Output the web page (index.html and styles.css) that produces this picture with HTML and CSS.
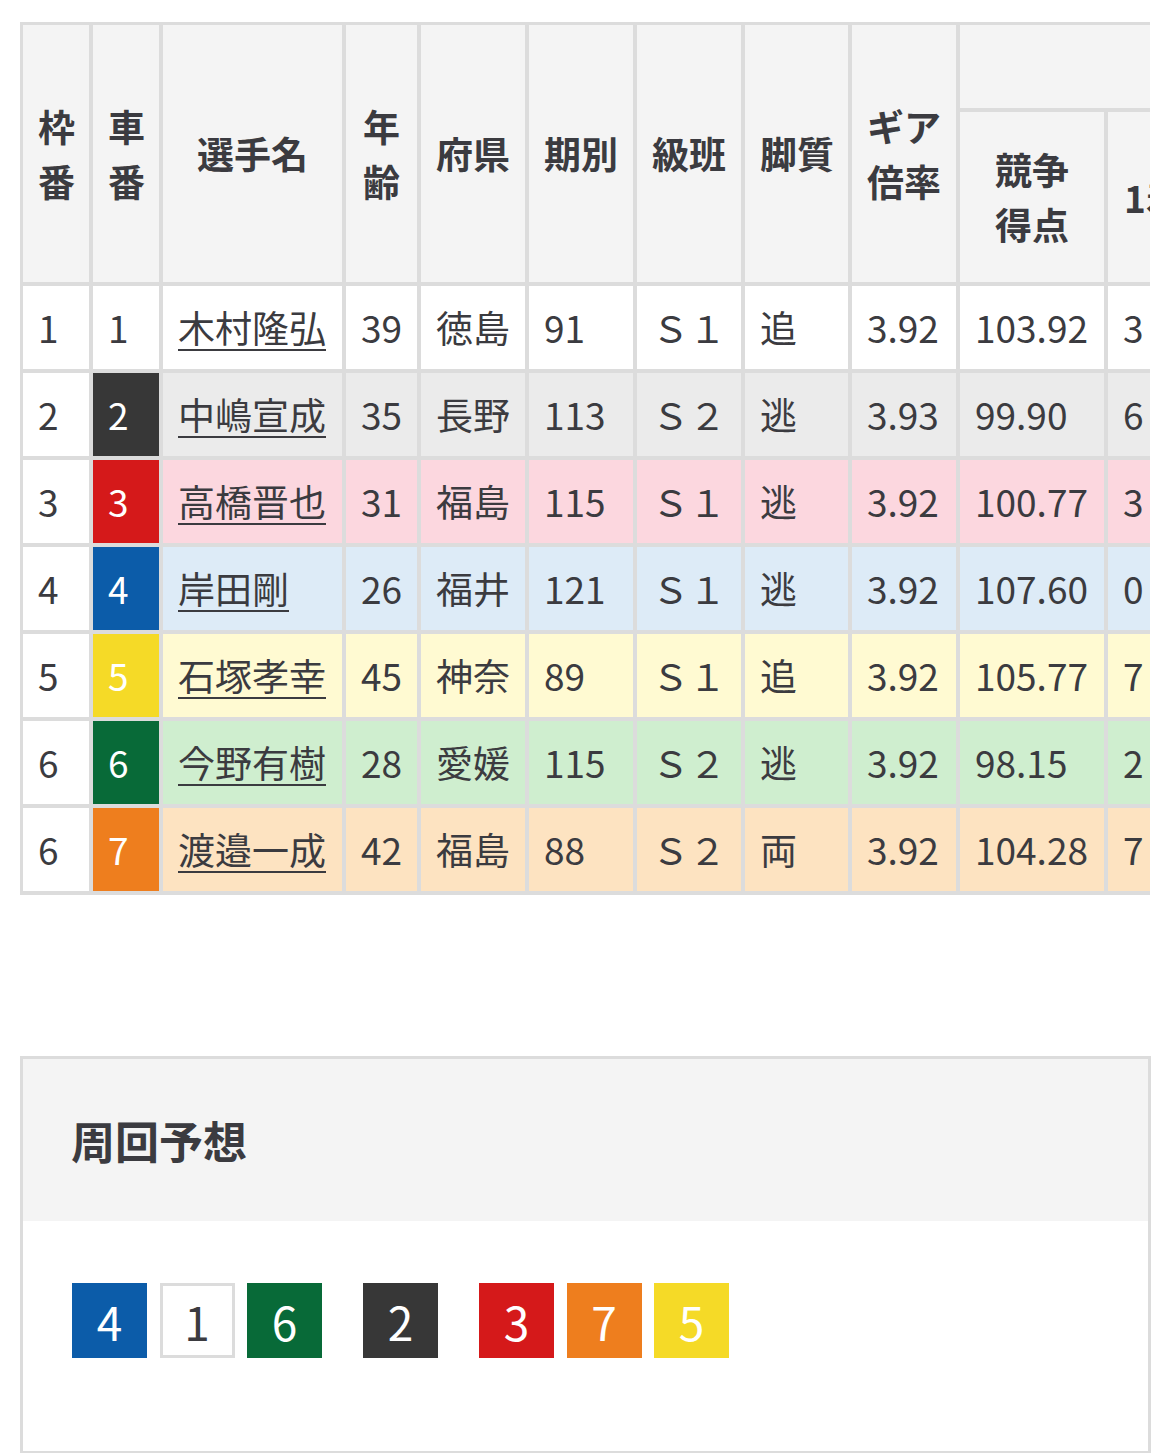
FILE: index.html
```html
<!DOCTYPE html>
<html lang="ja">
<head>
<meta charset="utf-8">
<title>出走表</title>
<link rel="stylesheet" href="styles.css">
</head>
<body>
<div class="page">
  <div class="table-wrap">
    <table class="entry">
      <colgroup>
        <col class="w70"><col class="w70"><col class="w183"><col class="w75">
        <col class="w108"><col class="w108"><col class="w108"><col class="w107">
        <col class="w108"><col class="w148"><col class="w95">
      </colgroup>
      <thead>
        <tr class="hr1">
          <th rowspan="2">枠<br>番</th>
          <th rowspan="2">車<br>番</th>
          <th rowspan="2">選手名</th>
          <th rowspan="2">年<br>齢</th>
          <th rowspan="2">府県</th>
          <th rowspan="2">期別</th>
          <th rowspan="2">級班</th>
          <th rowspan="2">脚質</th>
          <th rowspan="2">ギア<br>倍率</th>
          <th colspan="2" class="group"></th>
        </tr>
        <tr class="hr2">
          <th>競争<br>得点</th>
          <th>1着</th>
        </tr>
      </thead>
      <tbody>
        <tr class="row r1">
          <td class="waku">1</td><td class="car c1">1</td>
          <td><a href="#" class="name">木村隆弘</a></td>
          <td>39</td><td>徳島</td><td>91</td><td>Ｓ１</td><td>追</td><td>3.92</td><td>103.92</td><td>3</td>
        </tr>
        <tr class="row r2">
          <td class="waku">2</td><td class="car c2">2</td>
          <td><a href="#" class="name">中嶋宣成</a></td>
          <td>35</td><td>長野</td><td>113</td><td>Ｓ２</td><td>逃</td><td>3.93</td><td>99.90</td><td>6</td>
        </tr>
        <tr class="row r3">
          <td class="waku">3</td><td class="car c3">3</td>
          <td><a href="#" class="name">高橋晋也</a></td>
          <td>31</td><td>福島</td><td>115</td><td>Ｓ１</td><td>逃</td><td>3.92</td><td>100.77</td><td>3</td>
        </tr>
        <tr class="row r4">
          <td class="waku">4</td><td class="car c4">4</td>
          <td><a href="#" class="name">岸田剛</a></td>
          <td>26</td><td>福井</td><td>121</td><td>Ｓ１</td><td>逃</td><td>3.92</td><td>107.60</td><td>0</td>
        </tr>
        <tr class="row r5">
          <td class="waku">5</td><td class="car c5">5</td>
          <td><a href="#" class="name">石塚孝幸</a></td>
          <td>45</td><td>神奈</td><td>89</td><td>Ｓ１</td><td>追</td><td>3.92</td><td>105.77</td><td>7</td>
        </tr>
        <tr class="row r6">
          <td class="waku">6</td><td class="car c6">6</td>
          <td><a href="#" class="name">今野有樹</a></td>
          <td>28</td><td>愛媛</td><td>115</td><td>Ｓ２</td><td>逃</td><td>3.92</td><td>98.15</td><td>2</td>
        </tr>
        <tr class="row r7">
          <td class="waku">6</td><td class="car c7">7</td>
          <td><a href="#" class="name">渡邉一成</a></td>
          <td>42</td><td>福島</td><td>88</td><td>Ｓ２</td><td>両</td><td>3.92</td><td>104.28</td><td>7</td>
        </tr>
      </tbody>
    </table>
  </div>

  <section class="card">
    <div class="card-head">
      <h2 class="card-title">周回予想</h2>
    </div>
    <div class="card-body">
      <div class="line-group">
        <span class="box b4">4</span>
        <span class="box b1">1</span>
        <span class="box b6">6</span>
      </div>
      <div class="line-group">
        <span class="box b2">2</span>
      </div>
      <div class="line-group">
        <span class="box b3">3</span>
        <span class="box b7">7</span>
        <span class="box b5">5</span>
      </div>
    </div>
  </section>
</div>
</body>
</html>
```

FILE: styles.css
```css
html, body {
  margin: 0;
  padding: 0;
  background: #ffffff;
}

body {
  font-family: "Noto Sans CJK JP", "Noto Sans", sans-serif;
  color: #3b3b40;
}

.page {
  padding: 22px 19px 0 20px;
}

.table-wrap {
  width: 1130px;
  overflow: hidden;
}

.entry {
  border-collapse: separate;
  border-spacing: 0;
  table-layout: fixed;
  width: 1183px;
  border-top: 3px solid #dcdcdc;
  border-left: 3px solid #dcdcdc;
  font-size: 37px;
  line-height: 55px;
}

.w70 { width: 70px; }
.w75 { width: 75px; }
.w95 { width: 95px; }
.w107 { width: 107px; }
.w108 { width: 108px; }
.w148 { width: 148px; }
.w183 { width: 183px; }

.entry th,
.entry td {
  box-sizing: border-box;
  border-right: 4px solid #dcdcdc;
  border-bottom: 4px solid #dcdcdc;
  padding: 0 15px;
  white-space: nowrap;
  overflow: hidden;
}

.entry th {
  background: #f4f4f4;
  font-weight: 700;
  text-align: center;
  vertical-align: middle;
}

.hr1 .group {
  height: 87px;
}

.hr2 th {
  height: 174px;
}

.entry td {
  height: 87px;
  text-align: left;
  vertical-align: middle;
  font-weight: 400;
}

.r1 td { background: #ffffff; }
.r2 td { background: #ebebeb; }
.r3 td { background: #fcd7df; }
.r4 td { background: #ddebf7; }
.r5 td { background: #fffad2; }
.r6 td { background: #cfeecf; }
.r7 td { background: #fde3c1; }

.entry td.waku { background: #ffffff; }

.entry td.car { color: #ffffff; }
.entry td.c1 { background: #ffffff; color: #3b3b40; }
.entry td.c2 { background: #373737; }
.entry td.c3 { background: #d5191a; }
.entry td.c4 { background: #0c5ca9; }
.entry td.c5 { background: #f5da27; }
.entry td.c6 { background: #086a38; }
.entry td.c7 { background: #ee7e1e; }

.name {
  color: #3b3b40;
  text-decoration: underline;
  text-decoration-thickness: 2px;
  text-underline-offset: 6px;
}

.card {
  margin-top: 161px;
  width: 1131px;
  box-sizing: border-box;
  border: 3px solid #dcdcdc;
}

.card-head {
  background: #f4f4f4;
  padding: 48px 48px;
}

.card-title {
  margin: 0;
  font-size: 44px;
  line-height: 66px;
  font-weight: 700;
  color: #3b3b40;
}

.card-body {
  display: flex;
  gap: 41px;
  padding: 62px 0 93px 49px;
  background: #ffffff;
}

.line-group {
  display: flex;
  gap: 12.5px;
}

.box {
  width: 75px;
  height: 75px;
  box-sizing: border-box;
  display: flex;
  align-items: center;
  justify-content: center;
  font-size: 46px;
  line-height: 1;
  color: #ffffff;
}

.b1 { background: #ffffff; border: 3px solid #dcdcdc; color: #3b3b40; }
.b2 { background: #373737; }
.b3 { background: #d5191a; }
.b4 { background: #0c5ca9; }
.b5 { background: #f5da27; }
.b6 { background: #086a38; }
.b7 { background: #ee7e1e; }
```
